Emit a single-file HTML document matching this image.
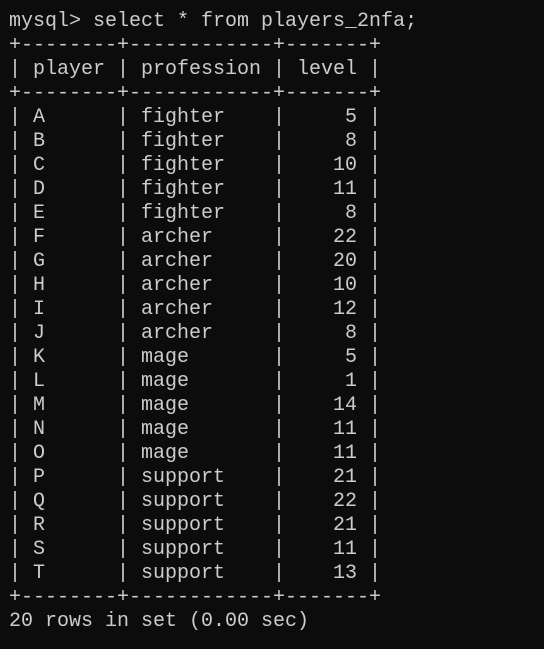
<html><head><style>
html,body{margin:0;padding:0;background:#0c0c0c;width:544px;height:649px;overflow:hidden}
pre{margin:0;padding:10px 0 0 9px;font-family:"Liberation Mono",monospace;font-size:20px;line-height:24px;color:#cccccc}
</style></head><body><pre>mysql&gt; select * from players_2nfa;
+--------+------------+-------+
| player | profession | level |
+--------+------------+-------+
| A      | fighter    |     5 |
| B      | fighter    |     8 |
| C      | fighter    |    10 |
| D      | fighter    |    11 |
| E      | fighter    |     8 |
| F      | archer     |    22 |
| G      | archer     |    20 |
| H      | archer     |    10 |
| I      | archer     |    12 |
| J      | archer     |     8 |
| K      | mage       |     5 |
| L      | mage       |     1 |
| M      | mage       |    14 |
| N      | mage       |    11 |
| O      | mage       |    11 |
| P      | support    |    21 |
| Q      | support    |    22 |
| R      | support    |    21 |
| S      | support    |    11 |
| T      | support    |    13 |
+--------+------------+-------+
20 rows in set (0.00 sec)
</pre></body></html>
